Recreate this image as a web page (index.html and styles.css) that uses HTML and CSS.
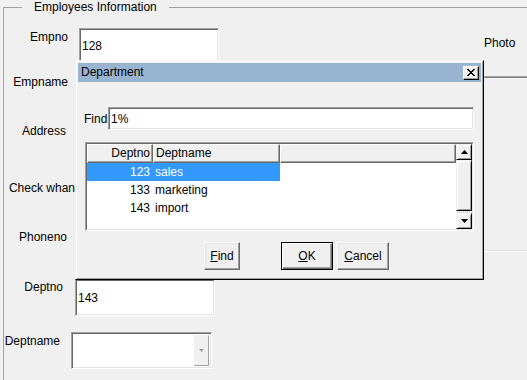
FILE: index.html
```html
<!DOCTYPE html>
<html>
<head>
<meta charset="utf-8">
<title>Employees Information</title>
<link rel="stylesheet" href="styles.css">
</head>
<body>
<fieldset class="group">
  <legend>Employees Information</legend>
  <div class="layout">
    <div class="form">
      <div class="row r-empno"><span class="lbl w-empno pt2">Empno</span><input class="field f-empno" value="128" readonly></div>
      <div class="row r-empname"><span class="lbl w-empname">Empname</span></div>
      <div class="row r-address"><span class="lbl w-address">Address</span></div>
      <div class="row r-check"><span class="lbl w-check">Check whan</span></div>
      <div class="row r-phone"><span class="lbl w-phone">Phoneno</span></div>
      <div class="row r-deptno"><span class="lbl w-deptno pt1">Deptno</span><input class="field f-deptno" value="143" readonly></div>
      <div class="row r-deptname"><span class="lbl w-deptname pt2">Deptname</span>
        <div class="field combo"><span class="combo-text"></span><span class="combo-btn"><svg width="5" height="3" viewBox="0 0 5 3"><path d="M0 0h5L2.5 3z" fill="#a0a0a0"/></svg></span></div>
      </div>
    </div>
    <div class="photo">
      <div class="photo-lbl">Photo</div>
      <div class="photo-frame"></div>
    </div>
  </div>
</fieldset>

<div class="dlg">
  <div class="dlg-in">
    <div class="title">
      <span>Department</span>
      <span class="close"><svg width="8" height="7" viewBox="0 0 8 7" shape-rendering="crispEdges"><path d="M0 0h2v1H0zM6 0h2v1H6zM1 1h2v1H1zM5 1h2v1H5zM2 2h4v1H2zM3 3h2v1H3zM2 4h4v1H2zM1 5h2v1H1zM5 5h2v1H5zM0 6h2v1H0zM6 6h2v1H6z" fill="#000"/></svg></span>
    </div>
    <div class="dlg-body">
      <div class="find-row"><span class="find-lbl">Find</span><input class="field find-input" value="1%" readonly></div>
      <div class="grid">
        <div class="grid-in">
          <div class="table">
            <div class="hdr">
              <div class="hc c1">Deptno</div>
              <div class="hc c2">Deptname</div>
              <div class="hc c3"></div>
            </div>
            <div class="tr sel"><div class="td c1">123</div><div class="td c2">sales</div></div>
            <div class="tr"><div class="td c1">133</div><div class="td c2">marketing</div></div>
            <div class="tr"><div class="td c1">143</div><div class="td c2">import</div></div>
          </div>
          <div class="sb">
            <div class="sb-btn"><svg width="7" height="4" viewBox="0 0 7 4"><path d="M3.5 0L7 4H0z" fill="#000"/></svg></div>
            <div class="sb-thumb"></div>
            <div class="sb-track"></div>
            <div class="sb-btn"><svg width="7" height="4" viewBox="0 0 7 4"><path d="M0 0h7L3.5 4z" fill="#000"/></svg></div>
          </div>
        </div>
      </div>
      <div class="btn-row">
        <button class="btn b-find"><u>F</u>ind</button>
        <button class="btn b-ok"><u>O</u>K</button>
        <button class="btn b-cancel"><u>C</u>ancel</button>
      </div>
    </div>
  </div>
</div>
</body>
</html>
```

FILE: styles.css
```css
html, body {
  margin: 0;
  padding: 0;
}
body {
  width: 527px;
  height: 380px;
  overflow: hidden;
  position: relative;
  background: #f0f0f0;
  color: #000;
  font: 12px/14px "Liberation Sans", Arial, sans-serif;
}

/* group box */
.group {
  box-sizing: border-box;
  margin: 0 0 0 3px;
  padding: 0;
  min-width: 0;
  height: 380px;
  border: 1px solid #a0a0a0;
  border-right: none;
  border-bottom: none;
}
.group legend {
  margin-left: 18px;
  padding: 0 12px;
  line-height: 14px;
}
.layout {
  display: flex;
  margin-top: 14px;
}
.form {
  width: 436px;
  display: flex;
  flex-direction: column;
}
.row {
  display: flex;
  align-items: flex-start;
}
.r-empno { height: 47px; }
.r-empname { height: 49px; }
.r-address { height: 57px; }
.r-check { height: 49px; }
.r-phone { height: 49px; }
.r-deptno { height: 53px; }
.r-deptname { height: 37px; }

.lbl {
  text-align: right;
  white-space: nowrap;
  flex: none;
}
.pt1 { padding-top: 1px; }
.pt2 { padding-top: 2px; }
.w-empno { width: 64px; }
.w-empname { width: 64px; }
.w-address { width: 62px; }
.w-check { width: 71px; }
.w-phone { width: 63px; }
.w-deptno { width: 59px; }
.w-deptname { width: 56px; }

.field {
  box-sizing: border-box;
  border: 1px solid;
  border-color: #a0a0a0 #fff #fff #a0a0a0;
  box-shadow: inset 1px 1px 0 #696969, inset -1px -1px 0 #e3e3e3;
  background: #fff;
  font: inherit;
  color: #000;
  outline: none;
  margin: 0;
  padding: 0 0 0 2px;
}
.f-empno {
  width: 140px;
  height: 36px;
  margin-left: 11px;
}
.f-deptno {
  width: 140px;
  height: 37px;
  margin-left: 12px;
}
.combo {
  width: 141px;
  height: 37px;
  margin-left: 11px;
  display: flex;
  justify-content: flex-end;
  padding: 2px;
}
.combo-btn {
  width: 15px;
  box-sizing: border-box;
  border: 1px solid;
  border-color: #f0f0f0 #a0a0a0 #a0a0a0 #f0f0f0;
  background: #f0f0f0;
  display: flex;
  align-items: center;
  justify-content: center;
}

/* photo */
.photo {
  flex: 1;
}
.photo-lbl {
  margin-top: 8px;
  padding-left: 44px;
}
.photo-frame {
  margin-top: 26px;
  height: 176px;
  box-sizing: border-box;
  border-top: 1px solid #a0a0a0;
  border-bottom: 1px solid #fff;
  box-shadow: inset 0 1px 0 #808080, inset 0 -1px 0 #e3e3e3;
}

/* dialog */
.dlg {
  position: absolute;
  left: 75px;
  top: 60px;
  width: 409px;
  height: 220px;
  box-sizing: border-box;
  border: 1px solid;
  border-color: #f0f0f0 #000 #000 #f0f0f0;
  background: #f0f0f0;
}
.dlg-in {
  box-sizing: border-box;
  height: 100%;
  border: 1px solid;
  border-color: #fff #a0a0a0 #a0a0a0 #fff;
  padding: 1px;
}
.title {
  height: 19px;
  background: #99b4d1;
  display: flex;
  align-items: center;
  justify-content: space-between;
  padding: 0 2px 0 3px;
  line-height: 19px;
}
.close {
  box-sizing: border-box;
  width: 16px;
  height: 14px;
  border: 1px solid;
  border-color: #fff #000 #000 #fff;
  box-shadow: inset -1px -1px 0 #a0a0a0;
  background: #f0f0f0;
  display: flex;
  align-items: center;
  justify-content: center;
  padding: 0 1px 1px 0;
}
.close svg { display: block; }

.dlg-body {
  padding: 25px 7px 0 6px;
}
.find-row {
  display: flex;
  align-items: center;
}
.find-lbl {
  width: 24px;
  padding-top: 1px;
}
.find-input {
  flex: 1;
  height: 23px;
}

.grid {
  margin: 12px 0 0 1px;
  height: 89px;
  box-sizing: border-box;
  border: 1px solid;
  border-color: #a0a0a0 #fff #fff #a0a0a0;
}
.grid-in {
  height: 100%;
  box-sizing: border-box;
  border: 1px solid;
  border-color: #696969 #e3e3e3 #e3e3e3 #696969;
  background: #fff;
  display: flex;
}
.table {
  flex: 1;
}
.hdr {
  display: flex;
  height: 19px;
}
.hc {
  box-sizing: border-box;
  height: 19px;
  border: 1px solid;
  border-color: #fff #696969 #696969 #fff;
  box-shadow: inset -1px -1px 0 #a0a0a0;
  background: #f0f0f0;
  line-height: 16px;
  white-space: nowrap;
}
.c1 { width: 66px; flex: none; }
.c2 { width: 127px; flex: none; }
.c3 { flex: 1; }
.hc.c1 { text-align: right; padding-right: 2px; }
.hc.c2 { padding-left: 2px; }

.tr {
  display: flex;
  height: 18px;
  line-height: 18px;
  width: 193px;
  box-sizing: border-box;
}
.td {
  box-sizing: border-box;
  white-space: nowrap;
}
.td.c1 { text-align: right; padding-right: 3px; }
.td.c2 { padding-left: 2px; }
.tr.sel {
  background: #3399ff;
  color: #fff;
  outline: 1px dotted #c87a2c;
  outline-offset: -1px;
}

.sb {
  width: 16px;
  display: flex;
  flex-direction: column;
  background: #f0f0f0;
}
.sb-btn, .sb-thumb {
  box-sizing: border-box;
  border: 1px solid;
  border-color: #f0f0f0 #000 #000 #f0f0f0;
  box-shadow: inset 1px 1px 0 #fff, inset -1px -1px 0 #a0a0a0;
  background: #f0f0f0;
}
.sb-btn {
  height: 16px;
  display: flex;
  align-items: center;
  justify-content: center;
}
.sb-btn svg { display: block; }
.sb-thumb {
  flex: 1;
}
.sb-track {
  height: 2px;
  background: repeating-linear-gradient(90deg, #fff 0 1px, #d8d8d8 1px 2px);
}

.btn-row {
  display: flex;
  margin-top: 11px;
  padding-left: 120px;
}
.btn {
  box-sizing: border-box;
  height: 28px;
  margin: 0;
  padding: 0 0 1px;
  font: inherit;
  color: #000;
  background: #f0f0f0;
  border: 1px solid;
  border-color: #fff #696969 #696969 #fff;
  box-shadow: inset -1px -1px 0 #a0a0a0, inset 1px 1px 0 #e3e3e3;
}
.b-find { width: 36px; }
.b-ok {
  width: 52px;
  margin-left: 41px;
  border-color: #000;
  box-shadow: inset 1px 1px 0 #fff, inset -1px -1px 0 #696969, inset -2px -2px 0 #a0a0a0;
}
.b-cancel {
  width: 52px;
  margin-left: 4px;
}
```
